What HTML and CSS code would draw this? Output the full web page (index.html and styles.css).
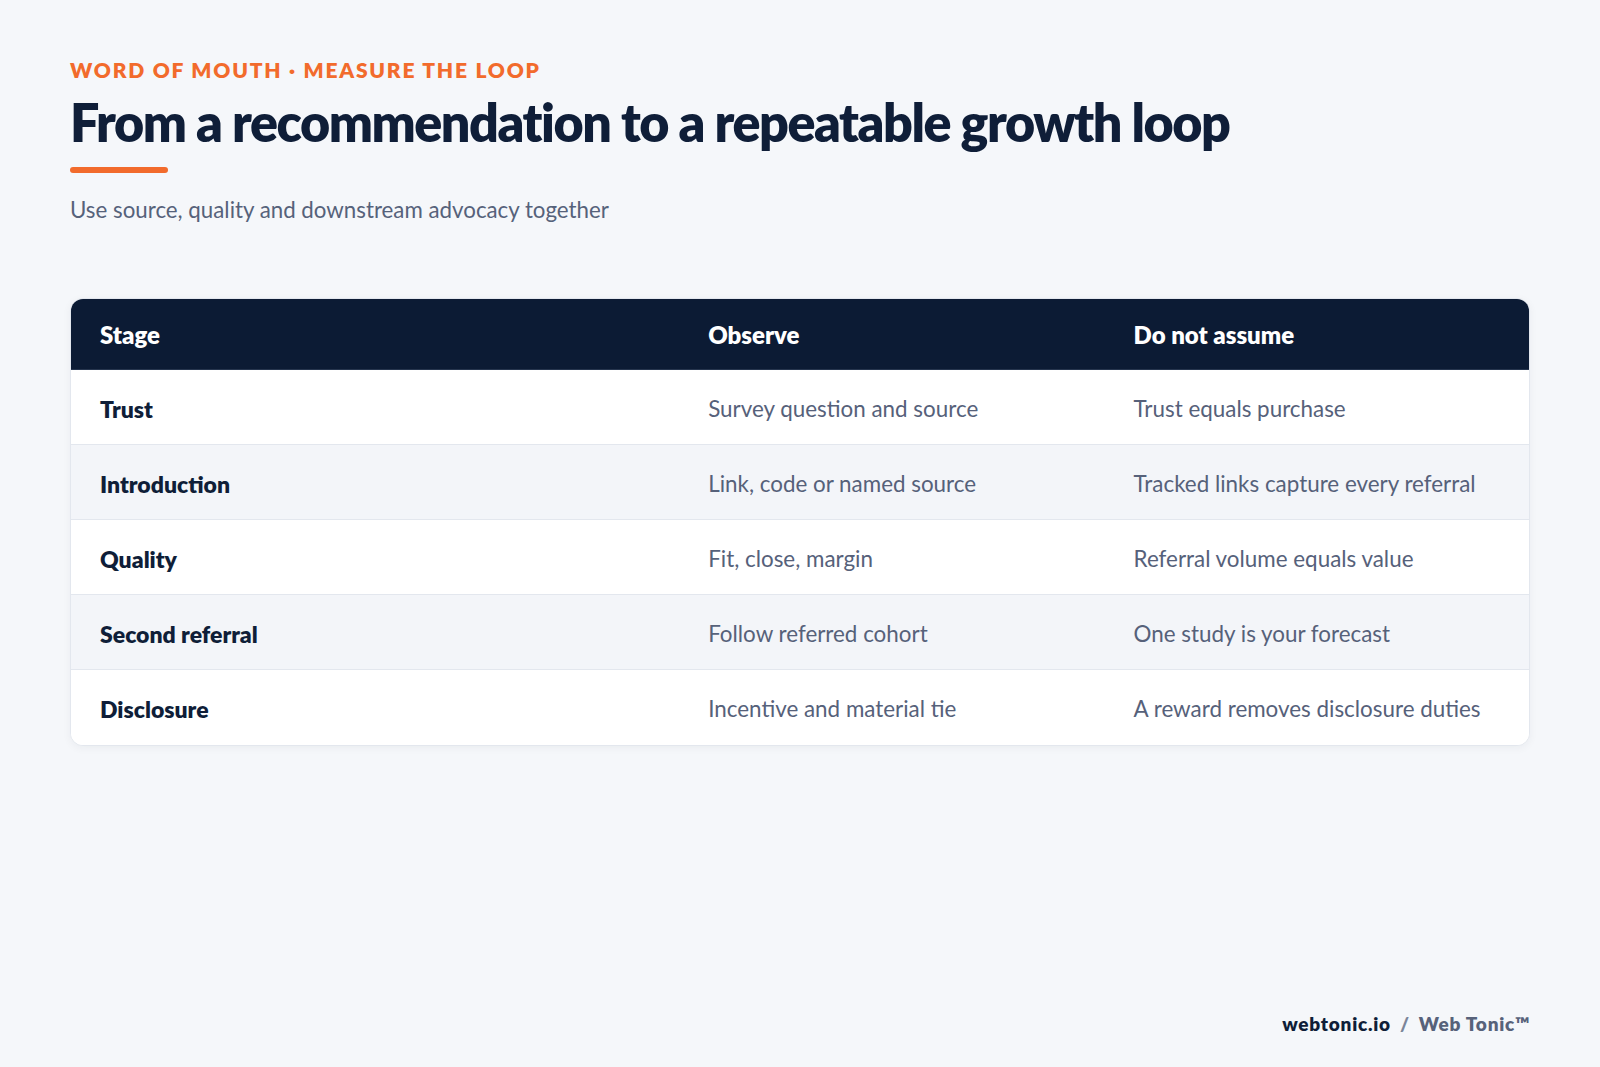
FILE: index.html
```html
<!DOCTYPE html>
<html lang="en">
<head>
<meta charset="utf-8">
<title>Word of mouth · Measure the loop</title>
<link rel="stylesheet" href="styles.css">
</head>
<body>
<main class="page">
  <header class="intro">
    <div class="eyebrow">WORD OF MOUTH · MEASURE THE LOOP</div>
    <h1 class="title">From a recommendation to a repeatable growth loop</h1>
    <div class="accent"></div>
    <p class="subtitle">Use source, quality and downstream advocacy together</p>
  </header>

  <section class="table">
    <div class="row head">
      <div class="cell">Stage</div>
      <div class="cell">Observe</div>
      <div class="cell">Do not assume</div>
    </div>
    <div class="row">
      <div class="cell stage">Trust</div>
      <div class="cell">Survey question and source</div>
      <div class="cell">Trust equals purchase</div>
    </div>
    <div class="row alt">
      <div class="cell stage">Introduction</div>
      <div class="cell">Link, code or named source</div>
      <div class="cell">Tracked links capture every referral</div>
    </div>
    <div class="row">
      <div class="cell stage">Quality</div>
      <div class="cell">Fit, close, margin</div>
      <div class="cell">Referral volume equals value</div>
    </div>
    <div class="row alt">
      <div class="cell stage">Second referral</div>
      <div class="cell">Follow referred cohort</div>
      <div class="cell">One study is your forecast</div>
    </div>
    <div class="row last">
      <div class="cell stage">Disclosure</div>
      <div class="cell">Incentive and material tie</div>
      <div class="cell">A reward removes disclosure duties</div>
    </div>
  </section>

  <footer class="footer">
    <span class="site">webtonic.io</span>
    <span class="sep">/</span>
    <span class="brand">Web Tonic™</span>
  </footer>
</main>
</body>
</html>
```

FILE: styles.css
```css
* { box-sizing: border-box; }

html, body {
  margin: 0;
  padding: 0;
  background: #f5f7fa;
}

body {
  font-family: Lato, "Noto Sans", "Liberation Sans", sans-serif;
  color: #0f1e38;
}

.page {
  width: 1600px;
  height: 1067px;
  padding: 57px 70px 32px 70px;
  display: flex;
  flex-direction: column;
}

.intro {
  display: flex;
  flex-direction: column;
  align-items: flex-start;
}

.eyebrow {
  font-size: 21px;
  line-height: 25px;
  font-weight: 800;
  letter-spacing: 0.085em;
  color: #f26b2c;
}

.title {
  margin: 9px 0 0 0;
  font-size: 52px;
  line-height: 62px;
  font-weight: 800;
  letter-spacing: -0.028em;
  color: #0f1e38;
}

.accent {
  margin-top: 14px;
  width: 98px;
  height: 6px;
  border-radius: 3px;
  background: #f26b2c;
}

.subtitle {
  margin: 24px 0 0 0;
  font-size: 22.3px;
  line-height: 26px;
  font-weight: 400;
  color: #56627a;
}

.table {
  margin-top: 75px;
  background: #ffffff;
  border: 1px solid #e3e7ee;
  border-radius: 13px;
  overflow: hidden;
  box-shadow: 0 2px 8px rgba(15, 30, 56, 0.05);
}

.row {
  display: grid;
  grid-template-columns: 608fr 426fr 426fr;
  height: 75px;
  align-items: center;
  border-bottom: 1px solid #e3e7ee;
  background: #ffffff;
}

.row.alt { background: #f3f5f9; }
.row.last { border-bottom: none; }

.row.head {
  height: 71px;
  background: #0c1b34;
  border-bottom: 1px solid #26354e;
}

.cell {
  padding: 3px 30px 0 30px;
  font-size: 22.4px;
  line-height: 26px;
  color: #56617a;
}

.cell:first-child { padding-left: 29px; }

.row.head .cell {
  padding-top: 2px;
  color: #ffffff;
  font-size: 24px;
  font-weight: 800;
}

.cell.stage {
  color: #0f1e38;
  font-size: 23px;
  font-weight: 800;
}

.footer {
  margin-top: auto;
  align-self: flex-end;
  display: flex;
  gap: 9px;
  font-size: 19px;
  line-height: 23px;
  font-weight: 800;
  letter-spacing: 0.04em;
}

.footer .site { color: #0f1e38; }
.footer .sep { color: #7b8599; }
.footer .brand { color: #57627a; }
```
